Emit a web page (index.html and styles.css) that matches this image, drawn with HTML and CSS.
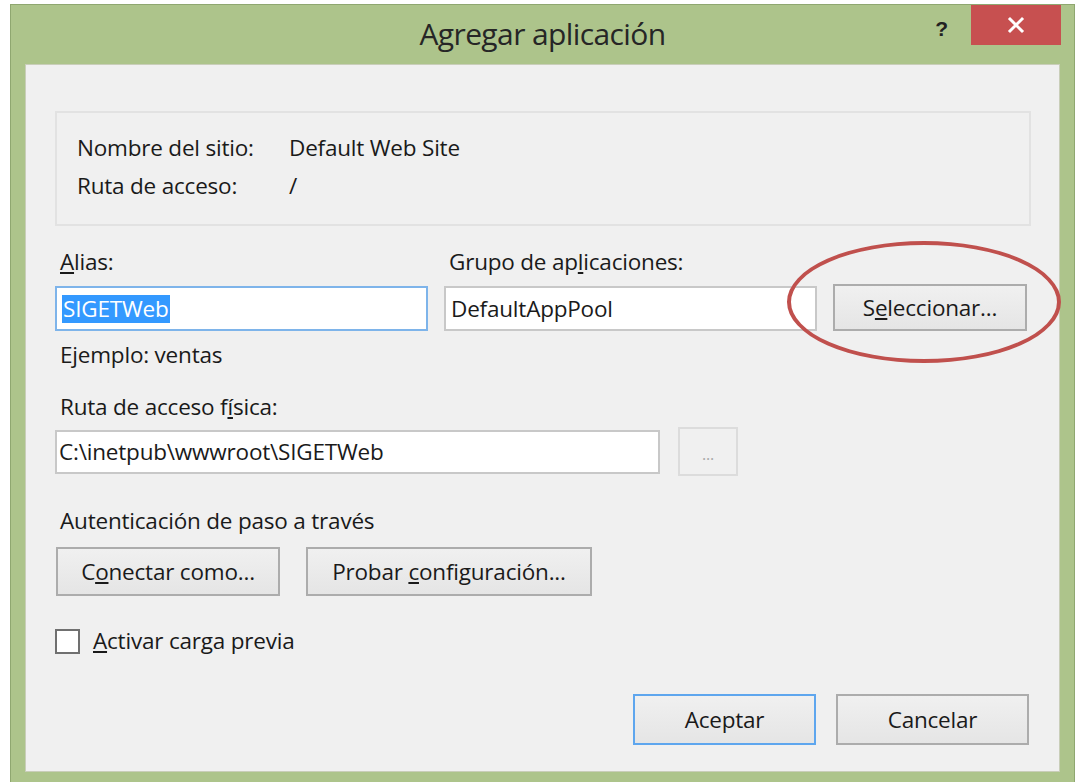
FILE: index.html
```html
<!DOCTYPE html>
<html lang="es">
<head>
<meta charset="utf-8">
<title>Agregar aplicación</title>
<link rel="stylesheet" href="styles.css">
</head>
<body>
<div class="window">
  <div class="titlebar">
    <div class="title">Agregar aplicación</div>
    <div class="caption-buttons">
      <span class="help">?</span>
      <span class="close">
        <svg width="20" height="20" viewBox="0 0 20 20"><path d="M4 4 L16 16 M16 4 L4 16" stroke="#fff" stroke-width="3" stroke-linecap="square"/></svg>
      </span>
    </div>
  </div>
  <div class="client">
    <div class="info-box">
      <div class="info-row"><span class="info-key">Nombre del sitio:</span><span>Default Web Site</span></div>
      <div class="info-row"><span class="info-key">Ruta de acceso:</span><span>/</span></div>
    </div>

    <div class="alias-grid">
      <label class="lbl"><u>A</u>lias:</label>
      <label class="lbl">Grupo de ap<u>l</u>icaciones:</label>
      <span></span>
      <div class="field focused"><span class="selected">SIGETWeb</span></div>
      <div class="field">DefaultAppPool</div>
      <div class="select-wrap">
        <button class="btn btn-select">S<u>e</u>leccionar...</button>
        <span class="ring"></span>
      </div>
    </div>

    <div class="hint">Ejemplo: ventas</div>

    <label class="lbl lbl-path">Ruta de acceso f<u>í</u>sica:</label>
    <div class="path-row">
      <div class="field field-path">C:\inetpub\wwwroot\SIGETWeb</div>
      <button class="btn btn-browse" disabled>...</button>
    </div>

    <div class="lbl lbl-auth">Autenticación de paso a través</div>
    <div class="auth-row">
      <button class="btn btn-connect">C<u>o</u>nectar como...</button>
      <button class="btn btn-test">Probar <u>c</u>onfiguración...</button>
    </div>

    <div class="check-row">
      <span class="checkbox"></span>
      <span><u>A</u>ctivar carga previa</span>
    </div>

    <div class="footer">
      <button class="btn btn-ok">Aceptar</button>
      <button class="btn btn-cancel">Cancelar</button>
    </div>
  </div>
</div>
</body>
</html>
```
FILE: styles.css
```css
* { box-sizing: border-box; }

html, body {
  margin: 0;
  padding: 0;
  background: #ffffff;
  overflow: hidden;
}

body {
  font-family: "Open Sans", "Noto Sans", sans-serif;
  color: #1a1a1a;
  font-size: 22.5px;
  letter-spacing: -0.2px;
}

.window {
  margin: 4px 0 0 10px;
  width: 1065px;
  height: 790px;
  background: #adc48b;
  border: 1px solid #8fa770;
  border-bottom: none;
  display: flex;
  flex-direction: column;
}

.titlebar {
  height: 59px;
  position: relative;
  display: flex;
  justify-content: center;
  align-items: center;
}

.title {
  font-size: 30px;
  color: #262626;
  letter-spacing: -0.6px;
  padding-bottom: 2px;
}

.caption-buttons {
  position: absolute;
  top: 0;
  right: 13px;
  display: flex;
  align-items: flex-start;
}

.help {
  font-family: "Liberation Sans", sans-serif;
  font-weight: bold;
  font-size: 21px;
  color: #222;
  margin-right: 23px;
  margin-top: 12px;
}

.close {
  width: 90px;
  height: 40px;
  background: #c75050;
  display: flex;
  align-items: center;
  justify-content: center;
}

.client {
  margin: 0 14px 0 14px;
  height: 708px;
  background: #f0f0f0;
  border: 1px solid #c9ceb9;
  padding: 46px 0 0 29px;
  display: flex;
  flex-direction: column;
}

.info-box {
  width: 976px;
  height: 115px;
  border: 2px solid #e2e2e2;
  padding: 20px 0 0 20px;
  display: flex;
  flex-direction: column;
  gap: 9px;
}

.info-row {
  display: flex;
  line-height: 29px;
}

.info-key {
  width: 212px;
}

.lbl {
  line-height: 28px;
  padding-left: 5px;
}

.alias-grid {
  margin-top: 22px;
  display: grid;
  grid-template-columns: 373px 373px 196px;
  column-gap: 16px;
  row-gap: 8px;
  align-items: end;
}

.field {
  height: 45px;
  background: #ffffff;
  border: 2px solid #c8c8c8;
  padding: 0 5px;
  display: flex;
  align-items: center;
  line-height: 28px;
}

.focused {
  border-color: #7eb4ea;
}

.selected {
  background: #3399ff;
  color: #ffffff;
  padding: 0 2px 0 1px;
}

.select-wrap {
  position: relative;
  height: 47px;
  display: flex;
}

.btn {
  font-family: inherit;
  font-size: 22.5px;
  letter-spacing: -0.2px;
  color: #1a1a1a;
  background: linear-gradient(#f0f0f0, #e5e5e5);
  border: 2px solid #acacac;
  padding: 0;
  height: 49px;
}

.btn-select {
  width: 194px;
  height: 47px;
}

.ring {
  position: absolute;
  left: -46px;
  top: -43px;
  width: 274px;
  height: 122px;
  border: 4px solid #c0504d;
  border-radius: 50%;
}

.hint {
  margin-top: 10px;
  padding-left: 5px;
  line-height: 28px;
}

.lbl-path {
  margin-top: 24px;
}

.path-row {
  margin-top: 6px;
  display: flex;
  align-items: center;
  gap: 18px;
}

.field-path {
  width: 605px;
  height: 44px;
  padding-left: 2px;
}

.btn-browse {
  width: 60px;
  height: 49px;
  background: #f0f0f0;
  border: 2px solid #dcdcdc;
  color: #a8a8a8;
  font-size: 16px;
  padding-top: 4px;
}

.lbl-auth {
  margin-top: 31px;
}

.auth-row {
  margin-top: 12px;
  display: flex;
  gap: 26px;
  padding-left: 1px;
}

.btn-connect { width: 224px; }
.btn-test { width: 286px; }

.check-row {
  margin-top: 31px;
  display: flex;
  align-items: center;
  gap: 13px;
  line-height: 28px;
}

.checkbox {
  width: 25px;
  height: 25px;
  background: #ffffff;
  border: 2px solid #707070;
}

.footer {
  margin-top: 39px;
  display: flex;
  justify-content: flex-end;
  gap: 20px;
  padding-right: 2px;
  width: 976px;
}

.btn-ok {
  width: 183px;
  height: 51px;
  border-color: #5ea6ee;
}

.btn-cancel {
  width: 193px;
  height: 51px;
}
```
